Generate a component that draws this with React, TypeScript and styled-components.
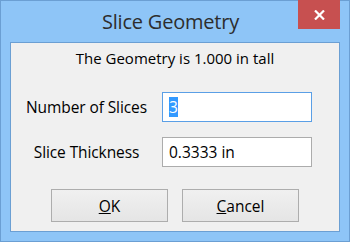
import React, { FC } from 'react';
import styled, { createGlobalStyle } from 'styled-components';

const Global = createGlobalStyle`
    html, body {
        margin: 0;
        padding: 0;
        background: #ffffff;
    }
    body {
        font-family: "Open Sans", "Noto Sans", "Liberation Sans", sans-serif;
    }
`;

const App: FC = () => {
    return (
        <>
            <Global />
            <Window>
                <TitleBar>
                    <span />
                    <Title>Slice Geometry</Title>
                    <CloseButton aria-label="Close">
                        <svg width="11" height="10" viewBox="0 0 11 10">
                            <path d="M1 0.5 L10 9.5 M10 0.5 L1 9.5" stroke="#ffffff" strokeWidth="2.2" />
                        </svg>
                    </CloseButton>
                </TitleBar>
                <Client>
                    <Heading>The Geometry is 1.000 in tall</Heading>
                    <Form>
                        <Label>Number of Slices</Label>
                        <Field focused>
                            <Selected>3</Selected>
                        </Field>
                        <Label>Slice Thickness</Label>
                        <Field>0.3333 in</Field>
                    </Form>
                    <Buttons>
                        <Button>
                            <u>O</u>K
                        </Button>
                        <Button>
                            <u>C</u>ancel
                        </Button>
                    </Buttons>
                </Client>
            </Window>
        </>
    );
};

const Window = styled.div`
    box-sizing: border-box;
    width: 350px;
    height: 242px;
    border: 1px solid #6b9fd3;
    background: #8ec5f7;
    display: flex;
    flex-direction: column;
    padding: 0 9px 9px 9px;
`;

const TitleBar = styled.div`
    height: 41px;
    display: grid;
    grid-template-columns: 1fr auto 1fr;
    margin: 0 -9px 0 -9px;
    padding-right: 9px;
`;

const Title = styled.div`
    font-family: "Open Sans", "Noto Sans", sans-serif;
    font-size: 20px;
    color: #2d2d2d;
    line-height: 41px;
    letter-spacing: -0.2px;
`;

const CloseButton = styled.div`
    justify-self: end;
    align-self: start;
    width: 42px;
    height: 29px;
    margin-top: -1px;
    background: #c75050;
    display: flex;
    align-items: center;
    justify-content: center;
`;

const Client = styled.div`
    flex: 1;
    box-sizing: border-box;
    border: 1px solid #6b9fd3;
    background: #f0f0f0;
    display: flex;
    flex-direction: column;
    font-family: "Open Sans", "Noto Sans", sans-serif;
    font-size: 15.5px;
    color: #000;
`;

const Heading = styled.div`
    text-align: center;
    height: 30px;
    line-height: 30px;
    font-size: 15px;
`;

const Form = styled.div`
    display: grid;
    grid-template-columns: 151px 150px;
    grid-auto-rows: 30px;
    row-gap: 15px;
    align-items: center;
    margin-top: 19px;
`;

const Label = styled.div`
    text-align: center;
    letter-spacing: -0.1px;
`;

const Field = styled.div<{ focused?: boolean }>`
    box-sizing: border-box;
    height: 30px;
    border: 1px solid ${p => (p.focused ? '#5a9fe6' : '#acacac')};
    background: #ffffff;
    padding: 0 6px;
    display: flex;
    align-items: center;
`;

const Selected = styled.span`
    background: #3399ff;
    color: #ffffff;
    line-height: 20px;
`;

const Buttons = styled.div`
    display: flex;
    justify-content: center;
    gap: 14px;
    margin-top: 22px;
`;

const Button = styled.div`
    box-sizing: border-box;
    width: 117px;
    height: 33px;
    border: 1px solid #adadad;
    background: linear-gradient(#f0f0f0, #e5e5e5);
    display: flex;
    align-items: center;
    justify-content: center;
    font-size: 15.5px;
`;

export default App;
